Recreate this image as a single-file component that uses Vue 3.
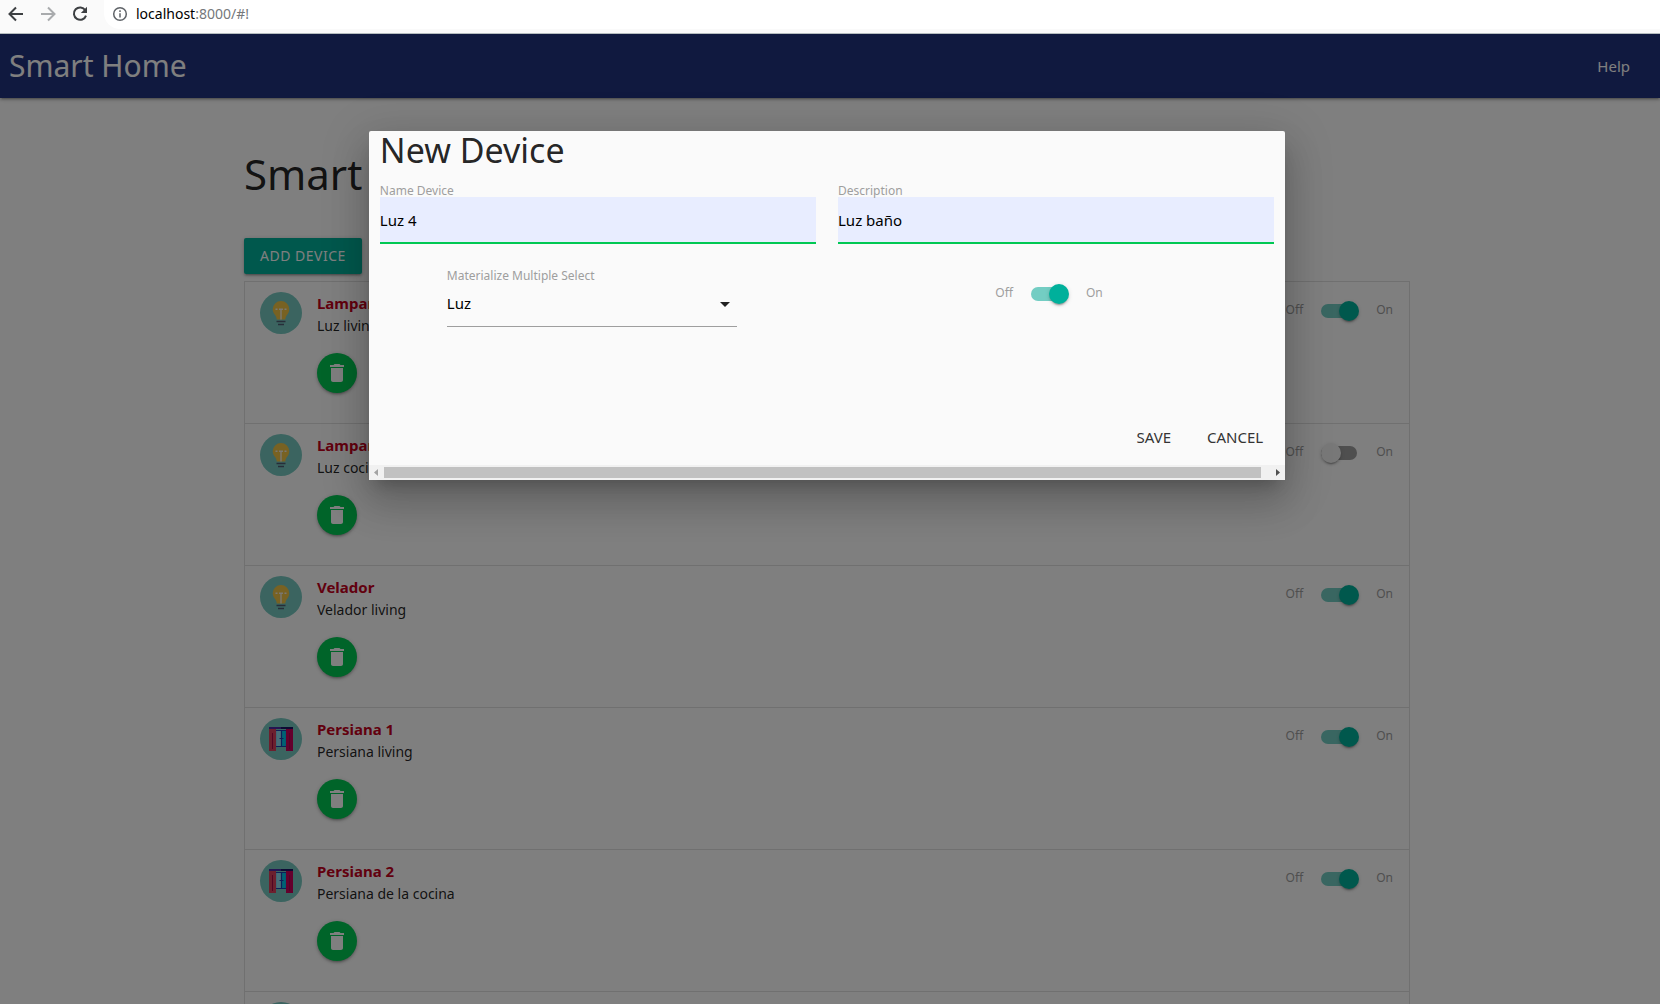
<script setup>
import { ref } from 'vue'

const devices = ref([
  { id: 1, name: 'Lampara 1', description: 'Luz living', type: 'light', on: true },
  { id: 2, name: 'Lampara 2', description: 'Luz cocina', type: 'light', on: false },
  { id: 3, name: 'Velador', description: 'Velador living', type: 'light', on: true },
  { id: 4, name: 'Persiana 1', description: 'Persiana living', type: 'blind', on: true },
  { id: 5, name: 'Persiana 2', description: 'Persiana de la cocina', type: 'blind', on: true },
  { id: 6, name: 'Persiana 3', description: 'Persiana balcon', type: 'blind', on: true },
])
const form = ref({ name: 'Luz 4', description: 'Luz baño', type: 'luz', on: true })
</script>

<template>
  <div class="window">
    <div class="toolbar">
      <button class="tool" aria-label="Back">
        <svg viewBox="0 0 16 16"><path d="M15 8H2M8 1.500L1.500 8L8 14.500" /></svg>
      </button>
      <button class="tool dim" aria-label="Forward">
        <svg viewBox="0 0 16 16"><path d="M1 8H14M8 1.500L14.500 8L8 14.500" /></svg>
      </button>
      <button class="tool" aria-label="Reload">
        <svg viewBox="0 0 16 16">
          <path d="M13.300 4.200A6.200 6.200 0 1 0 14 9.600" />
          <path class="solid" d="M15 0.800V7H8.800Z" />
        </svg>
      </button>
      <div class="address">
        <svg class="info" viewBox="0 0 16 16">
          <circle cx="8" cy="8" r="6.300" />
          <path d="M8 7.200V11.500M8 4.300V5.900" />
        </svg>
        <span>localhost<span class="rest">:8000/#!</span></span>
      </div>
    </div>

    <div class="page">
      <nav class="nav">
        <a class="brand" href="#!">Smart Home</a>
        <a class="help" href="#!">Help</a>
      </nav>

      <main class="content">
        <div class="container">
          <h1>Smart Home</h1>
          <button class="add">ADD DEVICE</button>
          <ul class="collection">
            <li v-for="device in devices" :key="device.id" class="item">
              <svg v-if="device.type === 'light'" class="avatar" viewBox="0 0 42 42">
                <circle cx="21" cy="21" r="21" fill="#76c8c0" />
                <path d="M21 9a8.300 8.300 0 0 0-8.300 8.300c0 4.700 4 6 4 10.200h8.600c0-4.200 4-5.500 4-10.200A8.300 8.300 0 0 0 21 9Z" fill="#f0c446" />
                <path d="M15.500 17.200h2M19 17.200h4M24.500 17.200h2M21 17.200V27.500" stroke="#f4efe4" stroke-width="1.400" fill="none" />
                <path d="M16.500 29.500h9M18 32.500h6" stroke="#4f5d73" stroke-width="1.400" />
              </svg>
              <svg v-else class="avatar" viewBox="0 0 42 42">
                <circle cx="21" cy="21" r="21" fill="#76c8c0" />
                <path d="M15 12h6v17h-6z" fill="#8fdcf0" />
                <path d="M21 12h6v17h-6z" fill="#00c4e8" />
                <path d="M15.500 29V12.500h11V29M21.500 13v16M15 28.500h12M19.500 20.500h4" fill="none" stroke="#1c3fae" stroke-width="1.200" />
                <path d="M9 9h12v2H9z" fill="#4a2ba5" />
                <path d="M21 9h12v2H21z" fill="#1a1466" />
                <path d="M9 11h7v22H9z" fill="#d8405c" />
                <path d="M26 11h7v22h-7z" fill="#c8005a" />
                <path d="M12.500 15v16M29.500 15v16" stroke="#a00a48" stroke-width="1" />
              </svg>
              <div class="details">
                <strong>{{ device.name }}</strong>
                <p>{{ device.description }}</p>
                <button class="delete" :aria-label="`Delete ${device.name}`">
                  <svg viewBox="0 0 24 24">
                    <path d="M6 19c0 1.100.9 2 2 2h8c1.100 0 2-.9 2-2V7H6v12zM19 4h-3.500l-1-1h-5l-1 1H5v2h14V4z" />
                  </svg>
                </button>
              </div>
              <label class="switch">Off<input v-model="device.on" type="checkbox" />On</label>
            </li>
          </ul>
        </div>
      </main>

      <div class="overlay">
        <form class="modal" role="dialog" aria-labelledby="modal-title" @submit.prevent>
          <div class="body">
            <h2 id="modal-title">New Device</h2>
            <div class="columns">
              <div class="field">
                <label for="name">Name Device</label>
                <input id="name" v-model="form.name" type="text" />
              </div>
              <div class="field">
                <label for="description">Description</label>
                <input id="description" v-model="form.description" type="text" />
              </div>
            </div>
            <div class="columns">
              <div class="field narrow">
                <label for="type">Materialize Multiple Select</label>
                <div class="select">
                  <select id="type" v-model="form.type">
                    <option value="luz">Luz</option>
                    <option value="persiana">Persiana</option>
                  </select>
                  <svg viewBox="0 0 24 24"><path d="M7 10l5 5 5-5z" /></svg>
                </div>
              </div>
              <div class="toggle">
                <label class="switch">Off<input v-model="form.on" type="checkbox" />On</label>
              </div>
            </div>
          </div>
          <div class="footer">
            <button type="submit">SAVE</button>
            <button type="button">CANCEL</button>
          </div>
          <div class="scrollbar">
            <svg class="faded" viewBox="0 0 15 15"><path d="M9 4v7L5 7.500z" /></svg>
            <div class="track"><div class="thumb"></div></div>
            <svg viewBox="0 0 15 15"><path d="M6 4v7l4-3.500z" /></svg>
          </div>
        </form>
      </div>
    </div>
  </div>
</template>

<style>
body {
  margin: 0;
}
</style>

<style scoped>
* {
  box-sizing: border-box;
}
button,
input,
select {
  font-family: inherit;
}
.window {
  display: flex;
  flex-direction: column;
  height: 100vh;
  overflow: hidden;
  font-family: 'Noto Sans', sans-serif;
  font-size: 14px;
  line-height: 22px;
  color: rgba(0, 0, 0, 0.87);
}
.toolbar {
  display: flex;
  flex: none;
  align-items: flex-start;
  gap: 16px;
  height: 34px;
  padding-left: 8px;
  background: #fafafa;
  border-bottom: 1px solid #b6bdbf;
}
.tool {
  display: flex;
  width: 16px;
  height: 28px;
  align-items: center;
  padding: 0;
  border: 0;
  background: none;
  color: #3c3f42;
}
.tool.dim {
  color: #a9abad;
}
.toolbar svg {
  width: 16px;
  height: 16px;
  fill: none;
  stroke: currentColor;
  stroke-width: 2;
}
.toolbar .solid {
  fill: currentColor;
  stroke: none;
}
.address {
  display: flex;
  flex: 1;
  align-items: center;
  gap: 8px;
  height: 29px;
  padding: 0 0 1px 8px;
  border-radius: 0 0 0 16px;
  background: #fff;
  color: #000;
}
.toolbar .info {
  stroke: #5f6368;
  stroke-width: 1.500;
}
.rest {
  color: #75787b;
}
.page {
  position: relative;
  flex: 1;
  min-height: 0;
  overflow: hidden;
  background: #fff;
}
.nav {
  display: flex;
  align-items: center;
  justify-content: space-between;
  height: 64px;
  padding: 0 30px 0 9px;
  background: #20327e;
  box-shadow: 0 2px 2px 0 rgba(0, 0, 0, 0.14), 0 3px 1px -2px rgba(0, 0, 0, 0.12), 0 1px 5px 0 rgba(0, 0, 0, 0.2);
}
.nav a {
  color: #fff;
  font-size: 15px;
  text-decoration: none;
}
.nav .brand {
  font-size: 30px;
}
.content {
  padding: 52px 6px 0 0;
}
.container {
  width: 70.5%;
  margin: 0 auto;
}
h1,
h2,
p {
  margin: 0;
  font-weight: 400;
}
h1 {
  margin-bottom: 40px;
  font-size: 42px;
  line-height: 48px;
}
.add {
  display: block;
  height: 36px;
  padding: 0 16px 2px;
  border: 0;
  border-radius: 2px;
  background: #00b09b;
  color: #fff;
  font-size: 14px;
  letter-spacing: 0.5px;
  box-shadow: 0 2px 2px 0 rgba(0, 0, 0, 0.14), 0 3px 1px -2px rgba(0, 0, 0, 0.12), 0 1px 5px 0 rgba(0, 0, 0, 0.2);
}
.collection {
  margin: 7px 0 0;
  padding: 0;
  border: 1px solid #e0e0e0;
  list-style: none;
}
.item {
  display: flex;
  align-items: flex-start;
  gap: 15px;
  height: 142px;
  padding: 10px 16px 0 15px;
  border-bottom: 1px solid #e0e0e0;
}
.avatar {
  width: 42px;
  height: 42px;
}
.details {
  flex: 1;
}
.details strong {
  display: block;
  color: #c4001c;
  font-size: 15px;
}
.details p {
  line-height: 24px;
}
.delete {
  display: flex;
  align-items: center;
  justify-content: center;
  width: 40px;
  height: 40px;
  margin-top: 15px;
  padding: 0;
  border: 0;
  border-radius: 50%;
  background: #00c853;
  box-shadow: 0 2px 2px 0 rgba(0, 0, 0, 0.14), 0 3px 1px -2px rgba(0, 0, 0, 0.12), 0 1px 5px 0 rgba(0, 0, 0, 0.2);
}
.delete svg {
  width: 24px;
  height: 24px;
  fill: #fff;
}
.switch {
  display: flex;
  align-items: center;
  height: 36px;
  color: #9e9e9e;
  font-size: 12px;
}
.switch input {
  position: relative;
  width: 36px;
  height: 14px;
  margin: 2px 19px 0 18px;
  border-radius: 15px;
  appearance: none;
  background: #9e9e9e;
}
.switch input::before {
  content: '';
  position: absolute;
  top: -3px;
  left: 0;
  width: 20px;
  height: 20px;
  border-radius: 50%;
  background: #f1f1f1;
  box-shadow: 0 3px 1px -2px rgba(0, 0, 0, 0.2), 0 2px 2px 0 rgba(0, 0, 0, 0.14), 0 1px 5px 0 rgba(0, 0, 0, 0.12);
}
.switch input:checked {
  background: #73cdc3;
}
.switch input:checked::before {
  left: 18px;
  background: #00b09b;
}
.overlay {
  position: absolute;
  inset: 0;
  display: flex;
  align-items: flex-start;
  justify-content: center;
  padding: 97px 6px 0 0;
  background: rgba(0, 0, 0, 0.5);
}
.modal {
  width: 55.4%;
  border-radius: 2px 2px 0 0;
  background: #fafafa;
  box-shadow: 0 24px 38px 3px rgba(0, 0, 0, 0.14), 0 9px 46px 8px rgba(0, 0, 0, 0.12), 0 11px 15px -7px rgba(0, 0, 0, 0.2);
}
.body {
  padding: 0 11px;
}
h2 {
  font-size: 34px;
  line-height: 38px;
}
.columns {
  display: grid;
  grid-template-columns: 1fr 1fr;
  gap: 22px;
  padding-top: 16px;
}
.field > label {
  display: block;
  color: #9e9e9e;
  font-size: 12px;
  line-height: 12px;
}
.field input {
  display: block;
  width: 100%;
  height: 47px;
  padding: 0;
  border: 0;
  border-bottom: 2px solid #00c853;
  background: #e8edff;
  color: #000;
  font-size: 15px;
}
.narrow {
  padding: 10px 79px 0 67px;
}
.select {
  display: flex;
  align-items: center;
  border-bottom: 1px solid #9e9e9e;
}
.select select {
  flex: 1;
  height: 44px;
  padding: 0 0 2px;
  border: 0;
  appearance: none;
  background: none;
  color: #000;
  font-size: 15px;
}
.select svg {
  width: 24px;
  height: 24px;
  fill: #212121;
}
.toggle {
  display: flex;
  justify-content: center;
  align-items: flex-start;
  padding: 15px 14px 0 0;
}
.footer {
  display: flex;
  justify-content: flex-end;
  gap: 4px;
  margin-top: 92px;
  padding: 0 6px 10px 0;
}
.footer button {
  height: 36px;
  padding: 0 16px 1px;
  border: 0;
  background: none;
  color: #343434;
  font-size: 15px;
}
.scrollbar {
  display: flex;
  align-items: center;
  height: 15px;
  background: #f1f1f1;
}
.scrollbar svg {
  width: 15px;
  height: 15px;
  fill: #505050;
}
.scrollbar .faded {
  fill: #a3a3a3;
}
.track {
  flex: 1;
}
.thumb {
  width: 99%;
  height: 11px;
  background: #c1c1c1;
}
</style>
